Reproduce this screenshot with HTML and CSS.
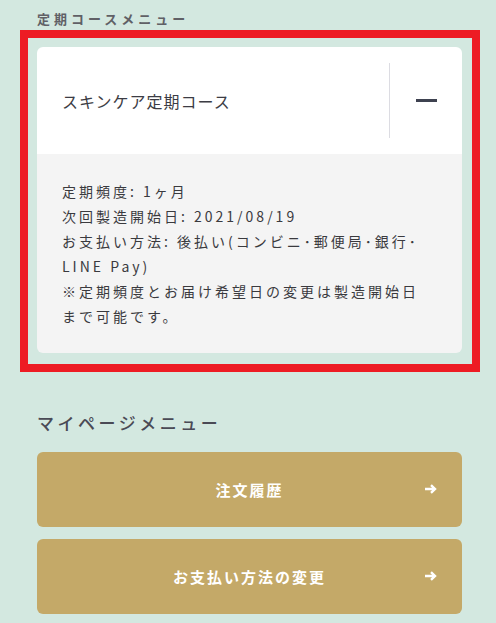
FILE: index.html
```html
<!DOCTYPE html>
<html lang="ja">
<head>
	<meta charset="UTF-8">
	<title>マイページ</title>
	<link rel="stylesheet" href="styles.css">
</head>
<body>
	<div id="page">
		<h2 class="sectionTitle small">定期コースメニュー</h2>
		<div class="highlight">
			<div class="course">
				<div class="courseHead">
					<span class="courseName">スキンケア定期コース</span>
					<span class="toggle"><i class="minus"></i></span>
				</div>
				<div class="courseBody">
					<p>定期頻度: 1ヶ月</p>
					<p>次回製造開始日: 2021/08/19</p>
					<p>お支払い方法: 後払い(コンビニ･郵便局･銀行･LINE Pay)</p>
					<p>※定期頻度とお届け希望日の変更は製造開始日まで可能です。</p>
				</div>
			</div>
		</div>
		<h2 class="sectionTitle">マイページメニュー</h2>
		<ul class="menu">
			<li><a href="#">注文履歴<svg class="arrow" width="12" height="10" viewBox="0 0 12 10"><path d="M0 5h9.5M6 1.2L10 5 6 8.8" fill="none" stroke="#fff" stroke-width="2.4"/></svg></a></li>
			<li><a href="#">お支払い方法の変更<svg class="arrow" width="12" height="10" viewBox="0 0 12 10"><path d="M0 5h9.5M6 1.2L10 5 6 8.8" fill="none" stroke="#fff" stroke-width="2.4"/></svg></a></li>
		</ul>
	</div>
</body>
</html>
```

FILE: styles.css
```css
* {
	margin: 0;
	padding: 0;
	box-sizing: border-box;
}
body {
	background: #d3e8e0;
	font-family: "Noto Sans CJK JP", "Noto Sans", sans-serif;
	color: #3c3c44;
}
#page {
	padding: 10px 16px 0 20px;
}
.sectionTitle {
	margin-left: 17px;
	font-size: 17px;
	font-weight: 500;
	letter-spacing: 3.5px;
	color: #4a4a55;
	line-height: 24px;
	margin-top: 39px;
	margin-bottom: 17px;
}
.sectionTitle.small {
	font-size: 13px;
	font-weight: bold;
	letter-spacing: 4px;
	color: #606066;
	line-height: 18px;
	margin-top: 0;
	margin-bottom: 2px;
}
.highlight {
	border: 8px solid #ed1c24;
	padding: 9px 10px 11px 9px;
	width: 460px;
}
.course {
	border-radius: 6px;
	overflow: hidden;
}
.courseHead {
	background: #fff;
	height: 107px;
	display: flex;
	align-items: center;
	justify-content: space-between;
	padding-left: 25px;
}
.courseName {
	font-size: 16px;
	letter-spacing: 1px;
	color: #3c3c44;
}
.toggle {
	width: 73px;
	height: 75px;
	border-left: 1px solid #dcdce2;
	display: flex;
	align-items: center;
	justify-content: center;
}
.minus {
	display: block;
	width: 21px;
	height: 3px;
	background: #3e4250;
}
.courseBody {
	background: #f4f4f4;
	padding: 25px 28px 24px 25px;
	font-size: 14px;
	line-height: 25px;
	letter-spacing: 3px;
	color: #3a3a3e;
}
.menu {
	list-style: none;
	width: 425px;
	margin-left: 17px;
}
.menu li {
	margin-bottom: 12px;
}
.menu a {
	display: flex;
	align-items: center;
	justify-content: center;
	position: relative;
	height: 75px;
	background: #c4a968;
	border-radius: 6px;
	color: #fff;
	font-size: 15px;
	font-weight: bold;
	letter-spacing: 2px;
	text-decoration: none;
}
.arrow {
	position: absolute;
	right: 25px;
	top: 32px;
}
```
